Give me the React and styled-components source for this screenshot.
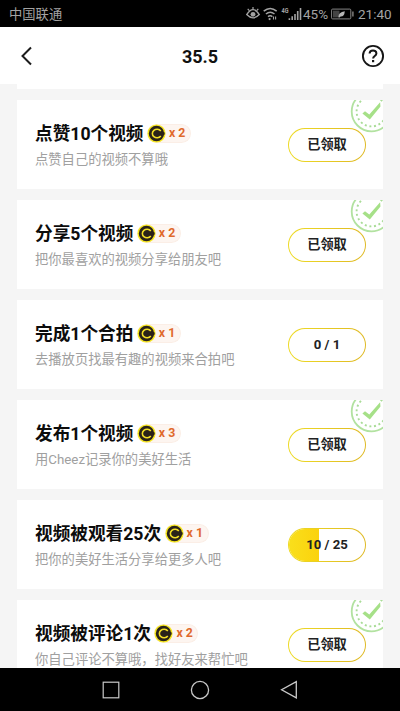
import styled, { createGlobalStyle } from "styled-components";

const GlobalStyle = createGlobalStyle`
  * {
    box-sizing: border-box;
  }
  body {
    margin: 0;
    background: #000;
    font-family: Roboto, "Noto Sans CJK SC", sans-serif;
  }
`;

const Screen = styled.div`
  width: 400px;
  height: 711px;
  display: flex;
  flex-direction: column;
  overflow: hidden;
  background: #f5f5f5;
`;

const StatusBar = styled.div`
  flex: none;
  height: 27px;
  padding: 1px 9px 0 9px;
  display: flex;
  align-items: center;
  background: #000;
  color: #a3a3a3;
  font-size: 14px;
  line-height: 26px;

  svg {
    flex: none;
    display: block;
  }
`;

const Carrier = styled.span`
  flex: 1;
  padding-top: 1px;
  font-size: 13.3px;
`;

const Percent = styled.span`
  width: 28px;
  font-size: 13.5px;
`;

const Clock = styled.span`
  width: 33px;
  margin-left: 4px;
  font-size: 13.5px;
  white-space: nowrap;
`;

const Header = styled.header`
  flex: none;
  height: 57px;
  padding: 0 15px 0 20px;
  display: flex;
  align-items: center;
  justify-content: space-between;
  background: #fff;

  svg {
    display: block;
  }
`;

const HeaderTitle = styled.h1`
  margin: 2px 0 0 6px;
  font-size: 18px;
  font-weight: 700;
  line-height: 24px;
  color: #111;
`;

const TaskList = styled.main`
  flex: 1;
  min-height: 0;
  padding: 0 17px;
  display: flex;
  flex-direction: column;
  gap: 11px;
  overflow: hidden;
`;

// tail of the card that is scrolled under the header
const CardTail = styled.div`
  flex: none;
  height: 5px;
  background: #fff;
`;

const Card = styled.section`
  flex: none;
  position: relative;
  height: 89px;
  padding: 0 17px 0 18px;
  display: flex;
  align-items: center;
  justify-content: space-between;
  overflow: hidden;
  background: #fff;
`;

const CardText = styled.div`
  padding-top: 2px;
`;

const CardTitle = styled.h2`
  margin: 0;
  display: flex;
  align-items: center;
  height: 26px;
  font-size: 17.65px;
  font-weight: 700;
  line-height: 26px;
  color: #0c0c0c;
  white-space: nowrap;
`;

const CardDesc = styled.p`
  margin: 2px 0 0;
  font-size: 13.3px;
  line-height: 22px;
  color: #a0a0a0;
  white-space: nowrap;
`;

const Reward = styled.span`
  display: flex;
  align-items: center;
  width: 44px;
  height: 19px;
  margin-left: 3.5px;
  border: 1px solid #fbeee6;
  border-left: 0;
  border-radius: 10px;
  background: #fdf5f0;
  color: #e0692b;
  font-size: 12.3px;
  font-weight: 700;
  line-height: 17px;

  svg {
    flex: none;
    margin-right: 3px;
  }
`;

const Pill = styled.button`
  flex: none;
  width: 78px;
  height: 34px;
  padding: 0;
  border: 1.5px solid transparent;
  border-radius: 17px;
  background: linear-gradient(#fff, #fff) padding-box,
    linear-gradient(90deg, #eedb24, #dfb923) border-box;
  color: #222;
  font-family: inherit;
  font-size: 13.2px;
  font-weight: 700;
  line-height: 32px;
  overflow: hidden;
`;

const PillFill = styled.span`
  display: block;
  height: 100%;
  background: linear-gradient(
    90deg,
    #f9df1c,
    #fbd20c ${(p) => p.$percent}%,
    transparent ${(p) => p.$percent}%
  );
`;

const StampSvg = styled.svg`
  position: absolute;
  top: -10px;
  right: -10px;
`;

function Coin() {
  return (
    <svg width="19" height="19" viewBox="0 0 19 19">
      <circle cx="9.5" cy="9.5" r="9.1" fill="#f6e720" />
      <circle cx="9.5" cy="9.5" r="7.7" fill="#2a2319" />
      <path
        d="M13.8 6.9A4.7 4.3 0 1 0 13.8 12.1"
        fill="none"
        stroke="#f3df25"
        strokeWidth="1.6"
      />
      <path d="M13 9.5h4.6" stroke="#2a2319" strokeWidth="2.4" />
    </svg>
  );
}

function Stamp() {
  return (
    <StampSvg width="43" height="43" viewBox="0 0 43 43" fill="none">
      <circle cx="21.5" cy="21.5" r="19.8" stroke="#b2e2a0" strokeWidth="1.8" />
      <circle
        cx="21.5"
        cy="21.5"
        r="14.9"
        stroke="#a9dc97"
        strokeWidth="1.9"
        strokeDasharray="2 2.68"
      />
      <path d="M12.4 23.6l2.6-2.4 4.3 3.2 10.8-12.2.4 4.4-10.7 13z" fill="#a6e088" />
    </StampSvg>
  );
}

const NavBar = styled.nav`
  flex: none;
  height: 43px;
  display: flex;
  align-items: center;
  justify-content: center;
  gap: 69px;
  background: #000;

  svg {
    display: block;
  }
`;

function StatusIcons() {
  return (
    <svg width="57" height="20" viewBox="0 0 57 20" fill="none" stroke="#a3a3a3">
      {/* eye comfort */}
      <path d="M.7 10.6Q7 .6 13.3 10.6Q7 17.2.7 10.6z" strokeWidth="1.4" />
      <circle cx="7" cy="10.3" r="2.4" fill="#a3a3a3" stroke="none" />
      <path d="M7 5.5V3M3.3 6.6L1.7 4.8M10.7 6.6l1.6-1.8" strokeWidth="1.2" />
      {/* wifi */}
      <path
        d="M17.7 7.2q6.5-5.4 13 0M19.9 10q4.3-3.5 8.6 0M22 12.7q2.2-1.8 4.4 0"
        strokeWidth="1.5"
      />
      <circle cx="23.6" cy="15.1" r="1.1" fill="#a3a3a3" stroke="none" />
      <path d="M27.5 15.5v-3M29.6 12.5v3" strokeWidth="1.1" />
      <text
        x="35.5"
        y="8.8"
        fill="#a3a3a3"
        stroke="none"
        fontSize="6.4"
        fontWeight="700"
        textLength="7"
        lengthAdjust="spacingAndGlyphs"
      >
        4G
      </text>
      {/* signal */}
      <path d="M43.4 16v-1.8M46.2 16v-3.8M49 16v-6M51.7 16V7M54.5 16V4" strokeWidth="1.6" />
    </svg>
  );
}

function Battery() {
  return (
    <svg width="23" height="12" viewBox="0 0 23 12">
      <rect x=".6" y="1.1" width="19.2" height="9.8" rx="1" fill="none" stroke="#858585" />
      <rect x="2" y="2.6" width="6.5" height="6.8" fill="#444" />
      <path d="M7.4 9.2q-.1-5 6.4-6-.4 5.6-4.2 5.4l-1.1.9z" fill="#b5b5b5" />
      <path d="M21.9 3.6v4.8" stroke="#858585" strokeWidth="1.4" />
    </svg>
  );
}

const tasks = [
  { title: "点赞10个视频", desc: "点赞自己的视频不算哦", reward: 2, claimed: true },
  { title: "分享5个视频", desc: "把你最喜欢的视频分享给朋友吧", reward: 2, claimed: true },
  { title: "完成1个合拍", desc: "去播放页找最有趣的视频来合拍吧", reward: 1, done: 0, total: 1 },
  { title: "发布1个视频", desc: "用Cheez记录你的美好生活", reward: 3, claimed: true },
  { title: "视频被观看25次", desc: "把你的美好生活分享给更多人吧", reward: 1, done: 10, total: 25 },
  { title: "视频被评论1次", desc: "你自己评论不算哦，找好友来帮忙吧", reward: 2, claimed: true },
];

function TaskCard({ title, desc, reward, claimed, done, total }) {
  return (
    <Card>
      <CardText>
        <CardTitle>
          {title}
          <Reward>
            <Coin />x {reward}
          </Reward>
        </CardTitle>
        <CardDesc>{desc}</CardDesc>
      </CardText>
      <Pill>
        {claimed ? (
          "已领取"
        ) : (
          <PillFill $percent={(done / total) * 100}>
            {done} / {total}
          </PillFill>
        )}
      </Pill>
      {claimed && <Stamp />}
    </Card>
  );
}

function App() {
  return (
    <Screen>
      <GlobalStyle />
      <StatusBar>
        <Carrier>中国联通</Carrier>
        <StatusIcons />
        <Percent>45%</Percent>
        <Battery />
        <Clock>21:40</Clock>
      </StatusBar>
      <Header>
        <svg width="13" height="20" viewBox="0 0 13 20" fill="none">
          <path d="M11 1.5L2.5 10l8.5 8.5" stroke="#1c1c1c" strokeWidth="2" />
        </svg>
        <HeaderTitle>35.5</HeaderTitle>
        <svg width="24" height="24" viewBox="0 0 24 24" fill="none" stroke="#161616">
          <circle cx="12" cy="12" r="10.1" strokeWidth="1.9" />
          <path
            d="M8.6 9.6c0-4.3 6.8-4.2 6.8-.2 0 2.6-3.3 2.5-3.3 5.1"
            strokeWidth="2"
          />
          <path d="M12.1 16v2.2" strokeWidth="2.2" />
        </svg>
      </Header>
      <TaskList>
        <CardTail />
        {tasks.map((task) => (
          <TaskCard key={task.title} {...task} />
        ))}
      </TaskList>
      <NavBar>
        <svg width="20" height="20" viewBox="0 0 20 20" fill="none">
          <rect x="2.2" y="2.2" width="15.6" height="15.6" stroke="#c8c8c8" strokeWidth="1.2" />
        </svg>
        <svg width="20" height="20" viewBox="0 0 20 20" fill="none">
          <circle cx="10" cy="10" r="8.6" stroke="#c8c8c8" strokeWidth="1.3" />
        </svg>
        <svg width="20" height="20" viewBox="0 0 20 20" fill="none">
          <path d="M17.3 1.7v16.2L2.6 9.8z" stroke="#c8c8c8" strokeWidth="1.3" />
        </svg>
      </NavBar>
    </Screen>
  );
}

export default App;
